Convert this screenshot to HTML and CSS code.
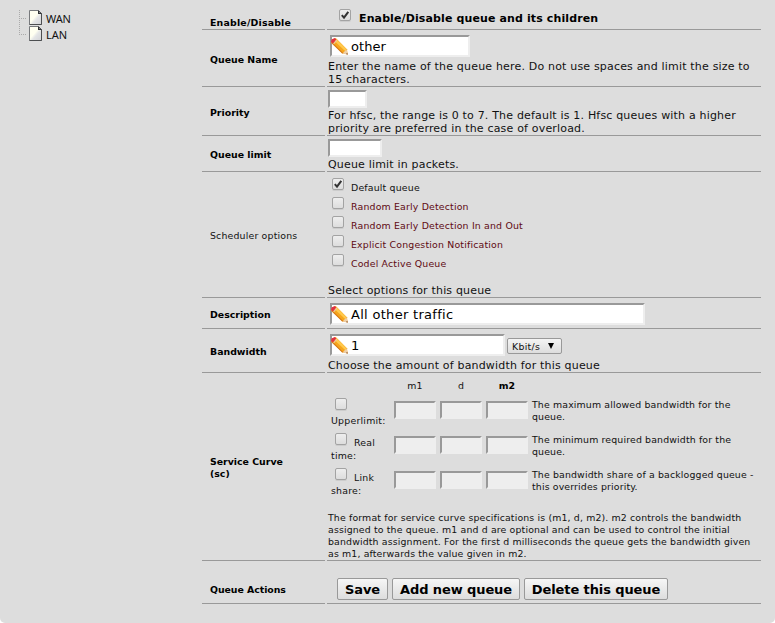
FILE: index.html
```html
<!DOCTYPE html>
<html lang="en">
<head>
<meta charset="utf-8">
<title>Queue settings</title>
<link rel="stylesheet" href="styles.css">
</head>
<body>
<svg width="0" height="0" class="defs" aria-hidden="true">
  <defs>
    <linearGradient id="sheet" x1="0" y1="0" x2="1" y2="1"><stop offset="0.45" stop-color="#fffff0"/><stop offset="0.6" stop-color="#e4e5e6"/><stop offset="1" stop-color="#d2d3d6"/></linearGradient>
    <symbol id="page" viewBox="0 0 13 15"><path d="M.5.5h9l3 3v11H.5z" fill="url(#sheet)" stroke="#77797c"/><path d="M12.5 3.5v11H.5" fill="none" stroke="#4c4e50"/><path d="M9 0l4 4H9z" fill="#303234"/><path d="M10 2l1 1h-1z" fill="#ddd"/></symbol>
    <symbol id="pencil" viewBox="0 0 16 16"><path d="M1 1.5 4.500 0 15 10.500 15.700 15.600 11 14.500 0 4.500z" fill="#f6a51c"/><path d="M5 1 14.500 10.500 13 12 3 2.500z" fill="#ffc94d"/><path d="M1 4.500 11 14.500" stroke="#d5781a" fill="none"/><path d="M.5 1.500 3.500 0 5 1.500 2 5 0 4z" fill="#df3144"/><path d="M5.500 2 2.500 5.500" stroke="#e8c8a4" fill="none"/><path d="M11 14.500 14.500 10.500 15.800 15.500z" fill="#eed0aa"/><path d="M14 15l1.300-1.200.7 2z" fill="#97633f"/></symbol>
  </defs>
</svg>
<div class="panel">
  <ul class="tree">
    <li><svg class="page"><use href="#page"/></svg><span class="wan">WAN</span></li>
    <li><svg class="page"><use href="#page"/></svg><span class="lan">LAN</span></li>
  </ul>
  <form class="form">
    <div class="label low"><b>Enable/Disable</b></div>
    <div class="cell enable"><input type="checkbox" class="check" checked><b>Enable/Disable queue and its children</b></div>

    <div class="label"><b>Queue Name</b></div>
    <div class="cell"><div class="field name"><svg><use href="#pencil"/></svg><span>other</span></div>
      <p class="help">Enter the name of the queue here. Do not use spaces and limit the size to<br>15 characters.</p></div>

    <div class="label"><b>Priority</b></div>
    <div class="cell boxed"><div class="box priority"></div>
      <p class="help">For hfsc, the range is 0 to 7. The default is 1. Hfsc queues with a higher<br>priority are preferred in the case of overload.</p></div>

    <div class="label"><b>Queue limit</b></div>
    <div class="cell boxed"><div class="box limit"></div><p class="help">Queue limit in packets.</p></div>

    <div class="label"><span>Scheduler options</span></div>
    <div class="cell options">
      <label><input type="checkbox" class="check" checked><span>Default queue</span></label>
      <label class="red"><input type="checkbox" class="check"><span>Random Early Detection</span></label>
      <label class="red"><input type="checkbox" class="check"><span>Random Early Detection In and Out</span></label>
      <label class="red"><input type="checkbox" class="check"><span>Explicit Congestion Notification</span></label>
      <label class="red"><input type="checkbox" class="check"><span>Codel Active Queue</span></label>
      <p class="help">Select options for this queue</p>
    </div>

    <div class="label"><b>Description</b></div>
    <div class="cell"><div class="field description"><svg><use href="#pencil"/></svg><span>All other traffic</span></div></div>

    <div class="label"><b>Bandwidth</b></div>
    <div class="cell bandwidth-cell"><div class="line"><div class="field bandwidth"><svg><use href="#pencil"/></svg><span>1</span></div><div class="select"><span>Kbit/s</span><i></i></div></div>
      <p class="help">Choose the amount of bandwidth for this queue</p></div>

    <div class="label"><b>Service Curve<br>(sc)</b></div>
    <div class="cell service">
      <div class="curve head"><span></span><span>m1</span><span>d</span><b>m2</b></div>
      <div class="curve"><div class="kind"><input type="checkbox" class="check"><br>Upperlimit:</div><i></i><i></i><i></i><p>The maximum allowed bandwidth for the<br>queue.</p></div>
      <div class="curve"><div class="kind"><input type="checkbox" class="check">Real<br>time:</div><i></i><i></i><i></i><p>The minimum required bandwidth for the<br>queue.</p></div>
      <div class="curve"><div class="kind"><input type="checkbox" class="check">Link<br>share:</div><i></i><i></i><i></i><p>The bandwidth share of a backlogged queue -<br>this overrides priority.</p></div>
      <p class="format">The format for service curve specifications is (m1, d, m2). m2 controls the bandwidth<br>assigned to the queue. m1 and d are optional and can be used to control the initial<br>bandwidth assignment. For the first d milliseconds the queue gets the bandwidth given<br>as m1, afterwards the value given in m2.</p>
    </div>

    <div class="label actions-label"><b>Queue Actions</b></div>
    <div class="cell actions"><button type="button" class="save">Save</button><button type="button" class="add">Add new queue</button><button type="button" class="delete">Delete this queue</button></div>
  </form>
</div>
</body>
</html>
```
FILE: styles.css
```css
* { box-sizing: border-box; }
body { margin: 0; background: #fff; font: 9.4px/12px "DejaVu Sans", sans-serif; letter-spacing: .17px; color: #111; white-space: nowrap; }
p { margin: 0; }
.defs { position: absolute; }
.panel { display: flex; height: 623px; background: #ddd; border-radius: 0 0 5px 5px; }
.tree { width: 202px; margin: 0; padding: 10px 0 0 19px; list-style: none; font: 11px/16px "Noto Sans", sans-serif; letter-spacing: -.15px; }
.tree li { display: flex; height: 16px; padding-left: 10px; background: repeating-linear-gradient(90deg, #aaa 0 1px, transparent 1px 2px) 0 8px / 8px 1px no-repeat, repeating-linear-gradient(#aaa 0 1px, transparent 1px 2px) 0 0 / 1px 16px no-repeat; }
.tree li:last-child { background-size: 8px 1px, 1px 8px; }
.tree span { margin: 1px 0 0 4px; }
.tree .lan { letter-spacing: 0; }
.page { width: 13px; height: 15px; }
.form { display: grid; grid-template-columns: 123px 434px; column-gap: 2px; grid-template-rows: 30px 57px 49px 36px 126px 31px 44px 188px 43px; height: 604px; }
.label, .cell { border-bottom: 1px solid #999; }
.label { display: flex; align-items: center; padding: 3px 0 0 8px; }
.label b { color: #000; letter-spacing: 0; }
.label.low { padding-top: 17px; }
.label.low b { letter-spacing: .2px; }
.cell { padding: 4px 0 0 1px; overflow: hidden; }
.check { appearance: none; flex: none; display: inline-block; width: 12px; height: 12px; margin: 0; border: 1px solid #a3a3a3; border-radius: 2px; background: linear-gradient(#eee, #ddd); box-shadow: 0 1px 0 #ccc; }
.check:checked { background: url("data:image/svg+xml,%3Csvg xmlns='http://www.w3.org/2000/svg' viewBox='0 0 10 10'%3E%3Cpath d='M1.800 5.200 4 7.700 8.300 1.800' fill='none' stroke='%23333' stroke-width='2'/%3E%3C/svg%3E"), linear-gradient(#eee, #ddd); }
.enable { display: flex; padding: 9px 0 0 12px; font-size: 11px; letter-spacing: .12px; color: #000; }
.enable b { margin: 4px 0 0 8px; }
.help { font-size: 11px; line-height: 13px; letter-spacing: .18px; }
.field { display: flex; align-items: center; width: 140px; height: 22px; margin-left: 2px; background: #fff; border: 2px solid; border-color: #999 #eee #eee #999; font-size: 13px; letter-spacing: .05px; color: #000; }
.field svg { width: 17px; height: 17px; margin: 0 3px 0 -1px; }
.field span { padding-top: 2px; }
.name { margin: 1px 0 3px 2px; }
.boxed { padding-top: 3px; }
.box { height: 18px; margin-bottom: 1px; border: 2px solid; border-color: #999 #eee #eee #999; background: #fff; }
.priority { width: 39px; }
.limit { width: 54px; }
.options { padding-top: 6px; }
.options label { display: flex; height: 19px; padding-left: 4px; }
.options label span { margin: 4px 0 0 7px; }
.options .red { color: #600a12; }
.options .help { margin-top: 11px; }
.description { width: 315px; margin-top: 1px; letter-spacing: .3px; }
.bandwidth-cell { padding-top: 5px; }
.line { display: flex; height: 25px; }
.bandwidth { width: 175px; }
.select { display: flex; align-items: center; width: 55px; height: 16px; margin: 4px 0 0 2px; padding: 1px 0 0 4px; border: 1px solid #999; border-radius: 2px; background: linear-gradient(#f4f4f4, #ddd); letter-spacing: .3px; }
.select i { margin: -2px 0 0 8px; border: solid transparent; border-width: 6px 3.500px 0; border-top-color: #000; }
.service { padding-top: 7px; letter-spacing: .14px; }
.curve { display: grid; grid-template-columns: 62px 42px 42px 42px 1fr; column-gap: 4px; height: 35px; }
.curve.head { height: 18px; text-align: center; }
.curve.head b { color: #000; }
.curve i { height: 18px; margin-top: 3px; border: 2px solid; border-color: #999 #eee #eee #999; background: #eee; }
.curve p { margin-top: 1px; }
.kind { padding-left: 3px; line-height: 13px; letter-spacing: .22px; }
.kind .check { margin: 0 7px 0 4px; vertical-align: 1px; }
.format { margin-top: 9px; }
.actions-label { padding-top: 16px; }
.label.actions-label b { letter-spacing: -.05px; }
.actions { display: flex; gap: 4px; padding: 17px 0 0 10px; }
button { width: 51px; height: 22px; padding: 1px 0 0; border: 1px solid #999; border-radius: 2px; background: linear-gradient(#f6f6f6, #ddd); font: bold 13px/19px "DejaVu Sans", sans-serif; letter-spacing: -.1px; color: #000; }
.add { width: 128px; }
.delete { width: 144px; }
```
